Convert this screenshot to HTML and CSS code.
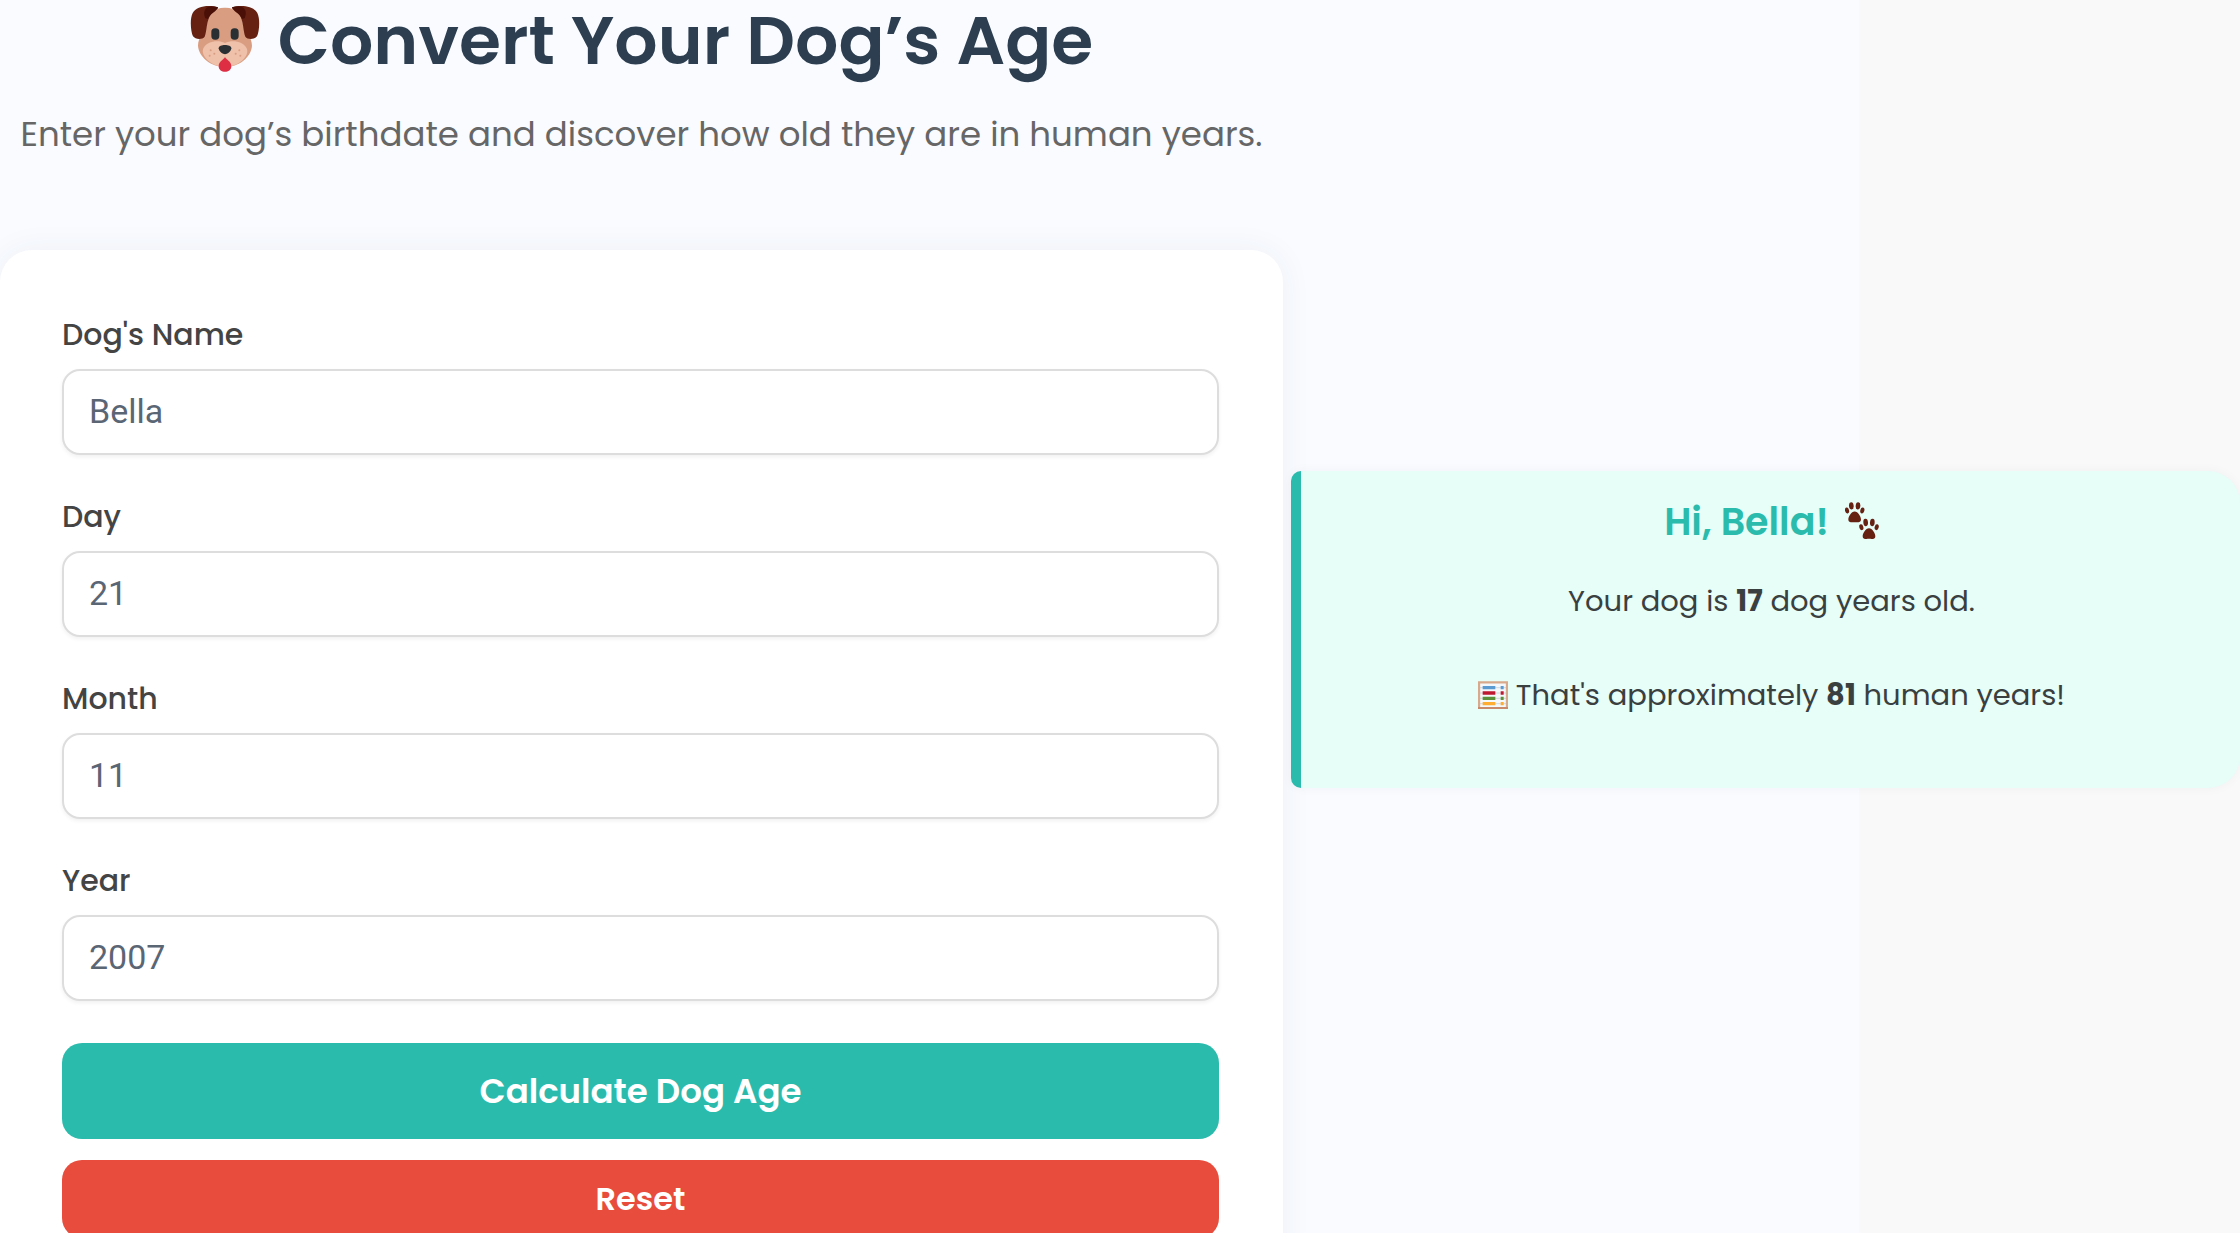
FILE: index.html
```html
<!DOCTYPE html>
<html lang="en">
<head>
    <meta charset="UTF-8">
    <meta name="viewport" content="width=device-width, initial-scale=1.0">
    <title>Dog Age Converter</title>
    <link rel="stylesheet" href="styles.css">
</head>
<body>
    <main class="page">
        <section class="converter">
            <header class="intro">
                <h1>
                    <svg class="dog" viewBox="0 0 210 200" aria-hidden="true">
                        <path fill="#D99E82" d="M105 6C72 5 55 28 50 58C43 82 24 95 24 120C26 153 62 184 105 184C149 184 184 153 186 120C186 95 167 82 160 58C155 28 138 5 105 6Z"/>
                        <path fill="#662113" d="M84 5C55-4 18 2 8 22C-1 40 2 78 9 92C16 102 38 102 44 93C51 77 48 49 62 27C68 17 84 13 84 5Z"/>
                        <path fill="#662113" d="M126 5C155-4 192 2 202 22C211 40 208 78 201 92C194 102 172 102 166 93C159 77 162 49 148 27C142 17 126 13 126 5Z"/>
                        <path fill="#4A1008" d="M84 5C68 0 54 0 48 8C40 18 42 28 46 38L54 40C60 24 82 16 84 5Z"/>
                        <path fill="#4A1008" d="M126 5C142 0 156 0 162 8C170 18 168 28 164 38L156 40C150 24 128 16 126 5Z"/>
                        <path fill="#EFC0AA" d="M105 112C82 101 50 108 40 128C31 150 62 183 105 184C149 183 180 150 170 128C160 108 128 101 105 112Z"/>
                        <rect x="64" y="68" width="24" height="34" rx="11" fill="#292F33"/>
                        <rect x="122" y="68" width="24" height="34" rx="11" fill="#292F33"/>
                        <path fill="#292F33" d="M86 128C86 115 124 115 124 128C124 137 111 146 105 146C99 146 86 137 86 128Z"/>
                        <path fill="#DD2E44" d="M105 154C108 162 124 166 124 182C124 204 86 204 86 182C86 166 102 162 105 154Z"/>
                        <g fill="#D99E82">
                            <circle cx="62" cy="134" r="3"/><circle cx="73" cy="144" r="3"/><circle cx="59" cy="150" r="3"/>
                            <circle cx="148" cy="134" r="3"/><circle cx="137" cy="144" r="3"/><circle cx="151" cy="150" r="3"/>
                        </g>
                    </svg>
                    Convert Your Dog’s Age
                </h1>
                <p>Enter your dog’s birthdate and discover how old they are in human years.</p>
            </header>

            <form class="card" id="dogForm">
                <label for="dogName">Dog's Name</label>
                <input type="text" id="dogName" value="Bella">

                <label for="day">Day</label>
                <input type="text" inputmode="numeric" id="day" value="21">

                <label for="month">Month</label>
                <input type="text" inputmode="numeric" id="month" value="11">

                <label for="year">Year</label>
                <input type="text" inputmode="numeric" id="year" value="2007">

                <button type="button" class="btn calculate">Calculate Dog Age</button>
                <button type="reset" class="btn reset">Reset</button>
            </form>
        </section>

        <section class="result">
            <h2>
                Hi, Bella!
                <svg class="paws" viewBox="0 0 102 110" aria-hidden="true">
                    <defs>
                        <g id="paw">
                            <path d="M29 28C39 28 48 43 48 52C48 62 38 60 29 60C20 60 10 62 10 52C10 43 19 28 29 28Z"/>
                            <ellipse cx="6" cy="25" rx="6" ry="9" transform="rotate(-15 6 25)"/>
                            <ellipse cx="19" cy="11" rx="7" ry="11" transform="rotate(-5 19 11)"/>
                            <ellipse cx="39" cy="11" rx="7" ry="11" transform="rotate(5 39 11)"/>
                            <ellipse cx="52" cy="25" rx="6" ry="9" transform="rotate(15 52 25)"/>
                        </g>
                    </defs>
                    <use href="#paw" fill="#662113"/>
                    <use href="#paw" fill="#662113" x="43" y="50"/>
                </svg>
            </h2>
            <p>Your dog is <strong>17</strong> dog years old.</p>
            <p>
                <svg class="abacus" viewBox="0 0 90 84" aria-hidden="true">
                    <path fill="#F5F8FA" d="M4 4H86V80H4Z"/>
                    <path fill="none" stroke="#BCC8D0" stroke-width="2" d="M6 20H84M6 36H84M6 52H84M6 68H84"/>
                    <path stroke="#5C9BD1" stroke-width="10" d="M14 20H52M68 20H77"/>
                    <path stroke="#BE1931" stroke-width="10" d="M14 36H52M68 36H77"/>
                    <path stroke="#5C913B" stroke-width="10" d="M14 52H52M68 52H77"/>
                    <path stroke="#FFAC33" stroke-width="10" d="M14 68H52M68 68H77"/>
                    <path fill="none" stroke="#D9A98C" stroke-width="7" d="M3 82V4H87V82"/>
                    <path stroke="#C98A6C" stroke-width="6" d="M0 81H90"/>
                </svg>
                That's approximately <strong>81</strong> human years!
            </p>
        </section>
    </main>
</body>
</html>
```
FILE: styles.css
```css
* {
    box-sizing: border-box;
}
body {
    font-family: Poppins, Inter, sans-serif;
    margin: 0;
    background-color: #fff;
    color: #3a3f3f;
}
.page {
    display: grid;
    grid-template-columns: 1283fr 949fr;
    column-gap: 8px;
    align-items: start;
    height: calc(100vh - 27px);
    overflow: hidden;
    background: linear-gradient(to right, #f9fbff 83%, #f9f9f9 83%);
}
.intro {
    height: 250px;
    text-align: center;
}
h1 {
    display: flex;
    justify-content: center;
    align-items: center;
    gap: 18px;
    margin: 0;
    font-size: 68px;
    line-height: 82px;
    font-weight: 600;
    color: #2c3e50;
}
.dog {
    width: 70px;
    height: 68px;
    margin-bottom: 4px;
}
.intro p {
    margin: 26px 0 0;
    font-size: 34px;
    line-height: 52px;
    color: #666;
    white-space: nowrap;
}
.card {
    display: flex;
    flex-direction: column;
    padding: 62px 64px 64px 62px;
    background-color: #fff;
    border-radius: 32px;
    box-shadow: 0 0 32px rgba(44, 62, 80, 0.06);
}
label {
    margin-bottom: 11px;
    font-size: 30px;
    line-height: 46px;
    font-weight: 500;
    color: #444;
}
input {
    height: 86px;
    margin-bottom: 39px;
    padding: 0 25px 2px;
    border: 2px solid #ddd;
    border-radius: 18px;
    background-color: #fff;
    box-shadow: 0 2px 4px rgba(0, 0, 0, 0.06);
    font-family: Roboto, sans-serif;
    font-size: 34px;
    color: #5b6675;
}
.btn {
    height: 96px;
    border: none;
    border-radius: 20px;
    color: #fff;
    font-family: inherit;
    font-weight: 600;
    cursor: pointer;
}
.calculate {
    margin: 3px 0 21px;
    background-color: #2bbbad;
    font-size: 34px;
}
.reset {
    height: 78px;
    background-color: #e74c3c;
    font-size: 32px;
}
.result {
    margin-top: 471px;
    padding: 26px 22px 68px 24px;
    border-left: 10px solid #2bbbad;
    border-radius: 10px 32px 32px 10px;
    background-color: #e6fdf8;
    box-shadow: 0 0 12px rgba(44, 62, 80, 0.04);
    text-align: center;
}
h2 {
    display: flex;
    justify-content: center;
    align-items: center;
    gap: 16px;
    margin: 0 0 29px;
    font-size: 38px;
    line-height: 50px;
    font-weight: 600;
    color: #2bbbad;
}
.paws {
    width: 34px;
    height: 37px;
    margin-bottom: 4px;
}
.result p {
    margin: 0 0 44px;
    font-size: 29px;
    line-height: 50px;
}
.result p:last-child {
    margin-bottom: 0;
}
.abacus {
    width: 30px;
    height: 28px;
    vertical-align: -4px;
}
```
